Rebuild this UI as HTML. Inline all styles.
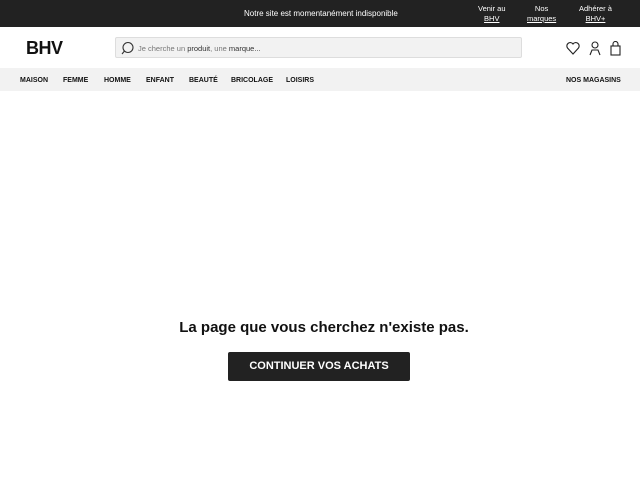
<!DOCTYPE html><html><head><meta charset="utf-8"><style>
*{margin:0;padding:0;box-sizing:border-box}
body{width:640px;height:480px;background:#fff;font-family:"Liberation Sans",Arial,sans-serif;position:relative;overflow:hidden;color:#111}
.top{position:absolute;left:0;top:0;width:640px;height:27px;background:#222;color:#fff;font-size:7.5px}
.top .msg{position:absolute;left:244px;top:9px;font-size:8px}
.top .l{position:absolute;top:4px;text-align:center;line-height:10px}
.top .l span{display:block;text-decoration:underline}
.logo{position:absolute;left:26px;top:38px;font-size:18px;font-weight:bold;letter-spacing:-0.5px}
.search{position:absolute;left:115px;top:37px;width:407px;height:21px;background:#f2f2f2;border:1px solid #ddd;border-radius:2px;font-size:7.5px;color:#777}
.search .t{position:absolute;left:22px;top:6px}
.search b{color:#333;font-weight:normal}
.nav{position:absolute;left:0;top:68px;width:640px;height:23px;background:#f2f2f2;font-size:7px;font-weight:bold}
.nav span{position:absolute;top:9px}
h1{position:absolute;left:0;width:648px;top:319px;text-align:center;font-size:15px;font-weight:bold}
.btn{position:absolute;left:228px;top:352px;width:182px;height:29px;background:#222;color:#fff;font-size:11px;font-weight:bold;text-align:center;line-height:29px;border-radius:2px}
</style></head><body>
<div class="top"><div class="msg">Notre site est momentanément indisponible</div>
<div class="l" style="left:478px">Venir au<span>BHV</span></div>
<div class="l" style="left:527px">Nos<span>marques</span></div>
<div class="l" style="left:579px">Adhérer à<span>BHV+</span></div></div>
<div class="logo">BHV</div>
<div class="search"><svg style="position:absolute;left:5px;top:3px" width="14" height="14" viewBox="0 0 14 14"><circle cx="7" cy="6.5" r="5" fill="none" stroke="#333" stroke-width="1.1"/><line x1="3.5" y1="10" x2="1" y2="13" stroke="#333" stroke-width="1.1"/></svg><div class="t">Je cherche un <b>produit</b>, une <b>marque...</b></div></div>
<svg style="position:absolute;left:566px;top:41px" width="56" height="15" viewBox="0 0 56 15" fill="none" stroke="#222" stroke-width="1.1">
<path d="M7 13 L1.5 7 A3 3 0 0 1 7 3 A3 3 0 0 1 12.5 7 Z"/>
<circle cx="29" cy="4" r="3"/><path d="M24 14 L26 9 H32 L34 14"/>
<rect x="45" y="5" width="9" height="9"/><path d="M47 5 V3 A2 2 0 0 1 52 3 V5"/></svg>
<div class="nav"><span style="left:20px">MAISON</span><span style="left:63px">FEMME</span><span style="left:104px">HOMME</span><span style="left:146px">ENFANT</span><span style="left:189px">BEAUTÉ</span><span style="left:231px">BRICOLAGE</span><span style="left:286px">LOISIRS</span><span style="left:566px">NOS MAGASINS</span></div>
<h1>La page que vous cherchez n'existe pas.</h1>
<div class="btn">CONTINUER VOS ACHATS</div>
</body></html>
